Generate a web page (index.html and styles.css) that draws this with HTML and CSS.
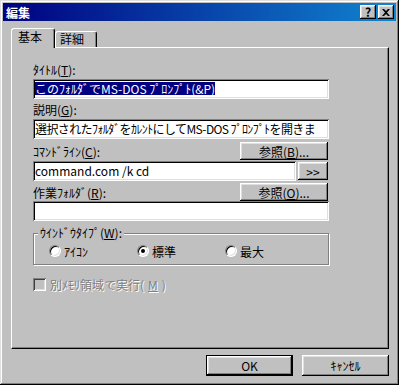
FILE: index.html
```html
<!DOCTYPE html>
<html lang="ja">
<head>
  <meta charset="utf-8">
  <title>編集</title>
  <link rel="stylesheet" href="styles.css">
</head>
<body>
  <div class="window">
    <div class="titlebar">
      <span class="title">編集</span>
      <div class="title-buttons">
        <button class="tbtn">?</button>
        <button class="tbtn">
          <svg width="8" height="7" viewBox="0 0 8 7"><path d="M0 0h2l2 2 2-2h2L5 3.5 8 7H6L4 5 2 7H0l3-3.5z" fill="#000"/></svg>
        </button>
      </div>
    </div>

    <div class="content">
      <div class="tabs">
        <div class="tab active">基本</div>
        <div class="tab">詳細</div>
      </div>

      <div class="panel">
        <div class="label first">ﾀｲﾄﾙ(<u>T</u>):</div>
        <div class="field"><span class="selected">このﾌｫﾙﾀﾞでMS-DOS ﾌﾟﾛﾝﾌﾟﾄ(&amp;P)</span></div>

        <div class="label">説明(<u>G</u>):</div>
        <div class="field tight">選択されたﾌｫﾙﾀﾞをｶﾚﾝﾄにしてMS-DOS ﾌﾟﾛﾝﾌﾟﾄを開きま</div>

        <div class="row">
          <span>ｺﾏﾝﾄﾞﾗｲﾝ(<u>C</u>):</span>
          <button class="btn browse">参照(<u>B</u>)...</button>
        </div>
        <div class="row row-cmd">
          <div class="field grow">command.com /k cd</div>
          <button class="btn more">&gt;&gt;</button>
        </div>

        <div class="row row-second">
          <span>作業ﾌｫﾙﾀﾞ(<u>R</u>):</span>
          <button class="btn browse">参照(<u>O</u>)...</button>
        </div>
        <div class="field flush"></div>

        <div class="group">
          <div class="group-title">ｳｲﾝﾄﾞｳﾀｲﾌﾟ(<u>W</u>):</div>
          <div class="radios">
            <span class="option"><span class="radio"></span>ｱｲｺﾝ</span>
            <span class="option"><span class="radio checked"></span>標準</span>
            <span class="option"><span class="radio"></span>最大</span>
          </div>
        </div>

        <div class="check disabled"><span class="checkbox"></span>別ﾒﾓﾘ領域で実行(<u>M</u>)</div>
      </div>

      <div class="actions">
        <button class="btn default">OK</button>
        <button class="btn">ｷｬﾝｾﾙ</button>
      </div>
    </div>
  </div>
</body>
</html>
```

FILE: styles.css
```css
body {
  margin: 0;
  background: #c0c0c0;
  font-family: "Noto Sans CJK JP", "DejaVu Sans", sans-serif;
  font-size: 12px;
  color: #000;
}
u {
  text-underline-offset: 1px;
}

.window {
  width: 399px;
  height: 385px;
  box-sizing: border-box;
  padding: 3px;
  background: #c0c0c0;
  box-shadow: inset -1px -1px #000, inset 1px 1px #dfdfdf,
              inset -2px -2px #808080, inset 2px 2px #fff;
}

.titlebar {
  height: 18px;
  display: flex;
  align-items: center;
  justify-content: space-between;
  padding: 0 2px 0 3px;
  background: linear-gradient(90deg, #000080, #1084d0);
  color: #fff;
  font-weight: bold;
}
.title-buttons {
  display: flex;
  gap: 2px;
}

button {
  font: inherit;
  color: inherit;
  border: 0;
  margin: 0;
  padding: 0;
}
.btn, .tbtn {
  background: #c0c0c0;
  color: #000;
  text-align: center;
  box-shadow: inset -1px -1px #000, inset 1px 1px #fff,
              inset -2px -2px #808080, inset 2px 2px #dfdfdf;
}
.tbtn {
  width: 16px;
  height: 14px;
  line-height: 14px;
  font-size: 12px;
  font-weight: bold;
  display: flex;
  align-items: center;
  justify-content: center;
}

.content {
  padding: 7px 7px 0 8px;
}

/* tabs */
.tabs {
  display: flex;
  height: 19px;
  align-items: flex-end;
}
.tab {
  width: 42px;
  height: 16px;
  box-sizing: border-box;
  border: 1px solid;
  border-color: #fff #000 transparent #fff;
  border-bottom: 0;
  border-radius: 3px 3px 0 0;
  box-shadow: inset -1px 0 #808080;
  padding-left: 4px;
  line-height: 14px;
}
.tab.active {
  position: relative;
  width: 44px;
  height: 20px;
  margin-bottom: -1px;
  background: #c0c0c0;
  padding-left: 6px;
  line-height: 15px;
}

.panel {
  width: 378px;
  height: 302px;
  box-sizing: border-box;
  border: 1px solid;
  border-color: #fff #000 #000 #fff;
  box-shadow: inset -1px -1px #808080;
  padding: 0 59px 0 21px;
}

.label {
  line-height: 14px;
  margin-top: 4px;
}
.label.first {
  margin-top: 15px;
}

.field {
  height: 20px;
  box-sizing: border-box;
  margin-top: 2px;
  padding: 0 2px;
  background: #fff;
  line-height: 20px;
  white-space: nowrap;
  overflow: hidden;
  box-shadow: inset 1px 1px #808080, inset -1px -1px #fff,
              inset 2px 2px #000, inset -2px -2px #dfdfdf;
}
.field.tight {
  letter-spacing: -0.6px;
}
.field.flush {
  margin-top: 0;
}
.field.grow {
  flex: 1;
  margin-top: 0;
}
.selected {
  display: inline-block;
  background: #000080;
  color: #fff;
  line-height: 13px;
}

.row {
  display: flex;
  align-items: center;
  justify-content: space-between;
  height: 18px;
  margin-top: 3px;
}
.row-cmd {
  height: 20px;
  margin-top: 1px;
  gap: 2px;
}
.row-second {
  margin-top: 2px;
}
.browse {
  width: 88px;
  height: 18px;
  margin-right: 1px;
}
.more {
  width: 30px;
  height: 18px;
  margin-right: 1px;
}

/* window type group */
.group {
  margin-top: 12px;
  border: 1px solid #808080;
  box-shadow: 1px 1px #fff, inset 1px 1px #fff;
  padding-bottom: 6px;
}
.group-title {
  width: fit-content;
  margin: -8px 0 0 4px;
  padding: 0 2px;
  background: #c0c0c0;
  line-height: 14px;
}
.radios {
  display: flex;
  align-items: center;
  height: 14px;
  margin-top: 4px;
  padding-left: 15px;
}
.option {
  display: flex;
  align-items: center;
  gap: 3px;
  width: 88px;
}
.radio {
  width: 12px;
  height: 12px;
  box-sizing: border-box;
  border-radius: 50%;
  border: 1px solid;
  border-color: #808080 #fff #fff #808080;
  background: #fff;
  box-shadow: inset 1px 1px #000, inset -1px -1px #dfdfdf;
  display: flex;
  align-items: center;
  justify-content: center;
}
.radio.checked::after {
  content: "";
  width: 4px;
  height: 4px;
  border-radius: 50%;
  background: #000;
}

.check {
  display: flex;
  align-items: center;
  gap: 4px;
  height: 13px;
  margin-top: 13px;
}
.check.disabled {
  color: #808080;
  text-shadow: 1px 1px #fff;
}
.checkbox {
  width: 13px;
  height: 13px;
  box-sizing: border-box;
  background: #c0c0c0;
  box-shadow: inset 1px 1px #808080, inset -1px -1px #fff,
              inset 2px 2px #404040, inset -2px -2px #dfdfdf;
}

.actions {
  display: flex;
  justify-content: flex-end;
  gap: 9px;
  margin-top: 6px;
}
.actions .btn {
  width: 87px;
  height: 21px;
}
.actions .btn.default {
  box-shadow: inset 0 0 0 1px #000,
              inset -2px -2px #000, inset 2px 2px #fff,
              inset -3px -3px #808080, inset 3px 3px #dfdfdf;
}
```
